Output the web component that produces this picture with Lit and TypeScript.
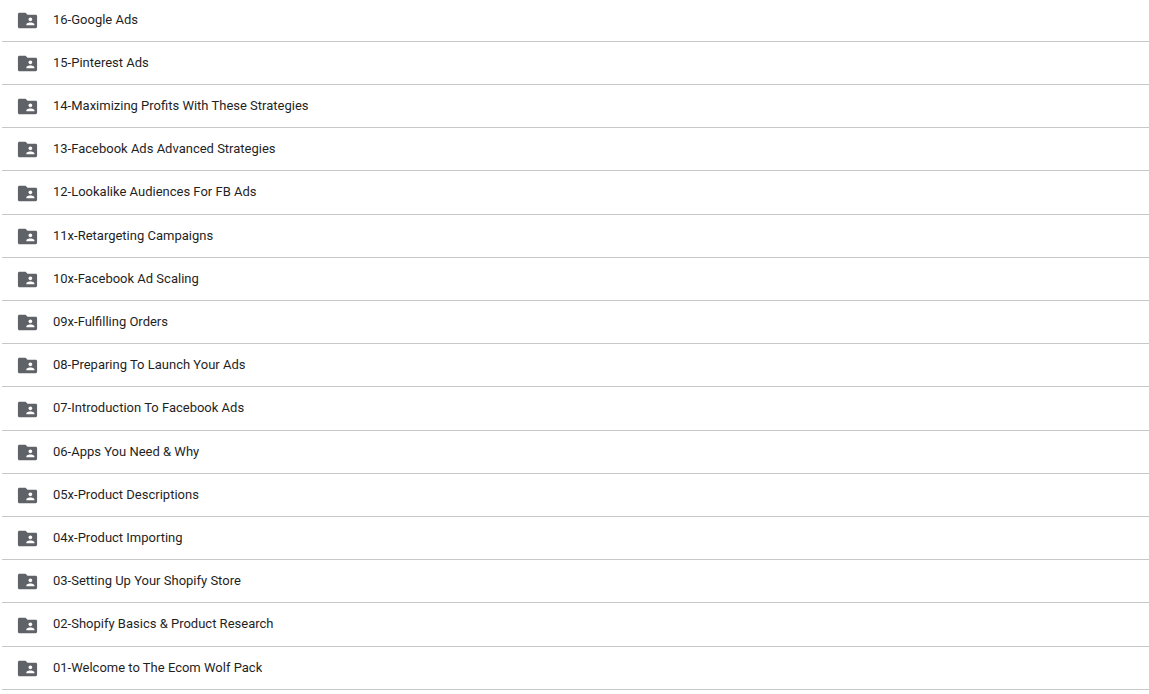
import { LitElement, html, css } from "lit";
import { customElement, property } from "lit/decorators.js";

const FOLDERS = [
  "16-Google Ads",
  "15-Pinterest Ads",
  "14-Maximizing Profits With These Strategies",
  "13-Facebook Ads Advanced Strategies",
  "12-Lookalike Audiences For FB Ads",
  "11x-Retargeting Campaigns",
  "10x-Facebook Ad Scaling",
  "09x-Fulfilling Orders",
  "08-Preparing To Launch Your Ads",
  "07-Introduction To Facebook Ads",
  "06-Apps You Need & Why",
  "05x-Product Descriptions",
  "04x-Product Importing",
  "03-Setting Up Your Shopify Store",
  "02-Shopify Basics & Product Research",
  "01-Welcome to The Ecom Wolf Pack",
];

@customElement("folder-row")
export class FolderRow extends LitElement {
  @property() name = "";

  static styles = css`
    :host {
      display: block;
      height: 100%;
    }
    .row {
      display: flex;
      align-items: center;
      gap: 14px;
      height: 100%;
      padding: 0 14px;
      box-sizing: border-box;
      color: #1f1f1f;
      text-decoration: none;
    }
    .icon {
      flex: none;
      width: 23px;
      height: 23px;
      margin-top: 1px;
      fill: #5f6368;
    }
    .name {
      overflow: hidden;
      white-space: nowrap;
      text-overflow: ellipsis;
      line-height: 20px;
      padding-bottom: 1px;
    }
  `;

  render() {
    return html`
      <a class="row" href="#">
        <svg class="icon" viewBox="0 0 24 24" aria-hidden="true">
          <path
            d="M20.6 6H12l-2-2H3.6C2.7 4 2 4.7 2 5.6v12.8c0 .9.7 1.6 1.6 1.6h17c.8 0 1.4-.6 1.4-1.4V7.4c0-.8-.6-1.4-1.4-1.4zM15 8.8c1.1 0 2 .9 2 2s-.9 2-2 2-2-.9-2-2 .9-2 2-2zm4.2 8.2h-8.4v-1c0-1.33 2.8-2 4.2-2s4.2.67 4.2 2v1z"
          />
        </svg>
        <span class="name">${this.name}</span>
      </a>
    `;
  }
}

@customElement("app-root")
export class AppRoot extends LitElement {
  static styles = css`
    :host {
      display: block;
      overflow: hidden;
      background: #fff;
      font-family: "Google Sans", Roboto, sans-serif;
      font-size: 13px;
    }
    .list {
      list-style: none;
      margin: -1px 0 0 2px;
      padding: 0;
    }
    .item {
      height: 42px;
      border-bottom: 1px solid #c7c7c7;
    }
    .item:nth-child(5n) {
      height: 43px;
    }
  `;

  render() {
    return html`
      <ul class="list">
        ${FOLDERS.map(
          (name) => html`<li class="item"><folder-row .name=${name}></folder-row></li>`
        )}
      </ul>
    `;
  }
}
